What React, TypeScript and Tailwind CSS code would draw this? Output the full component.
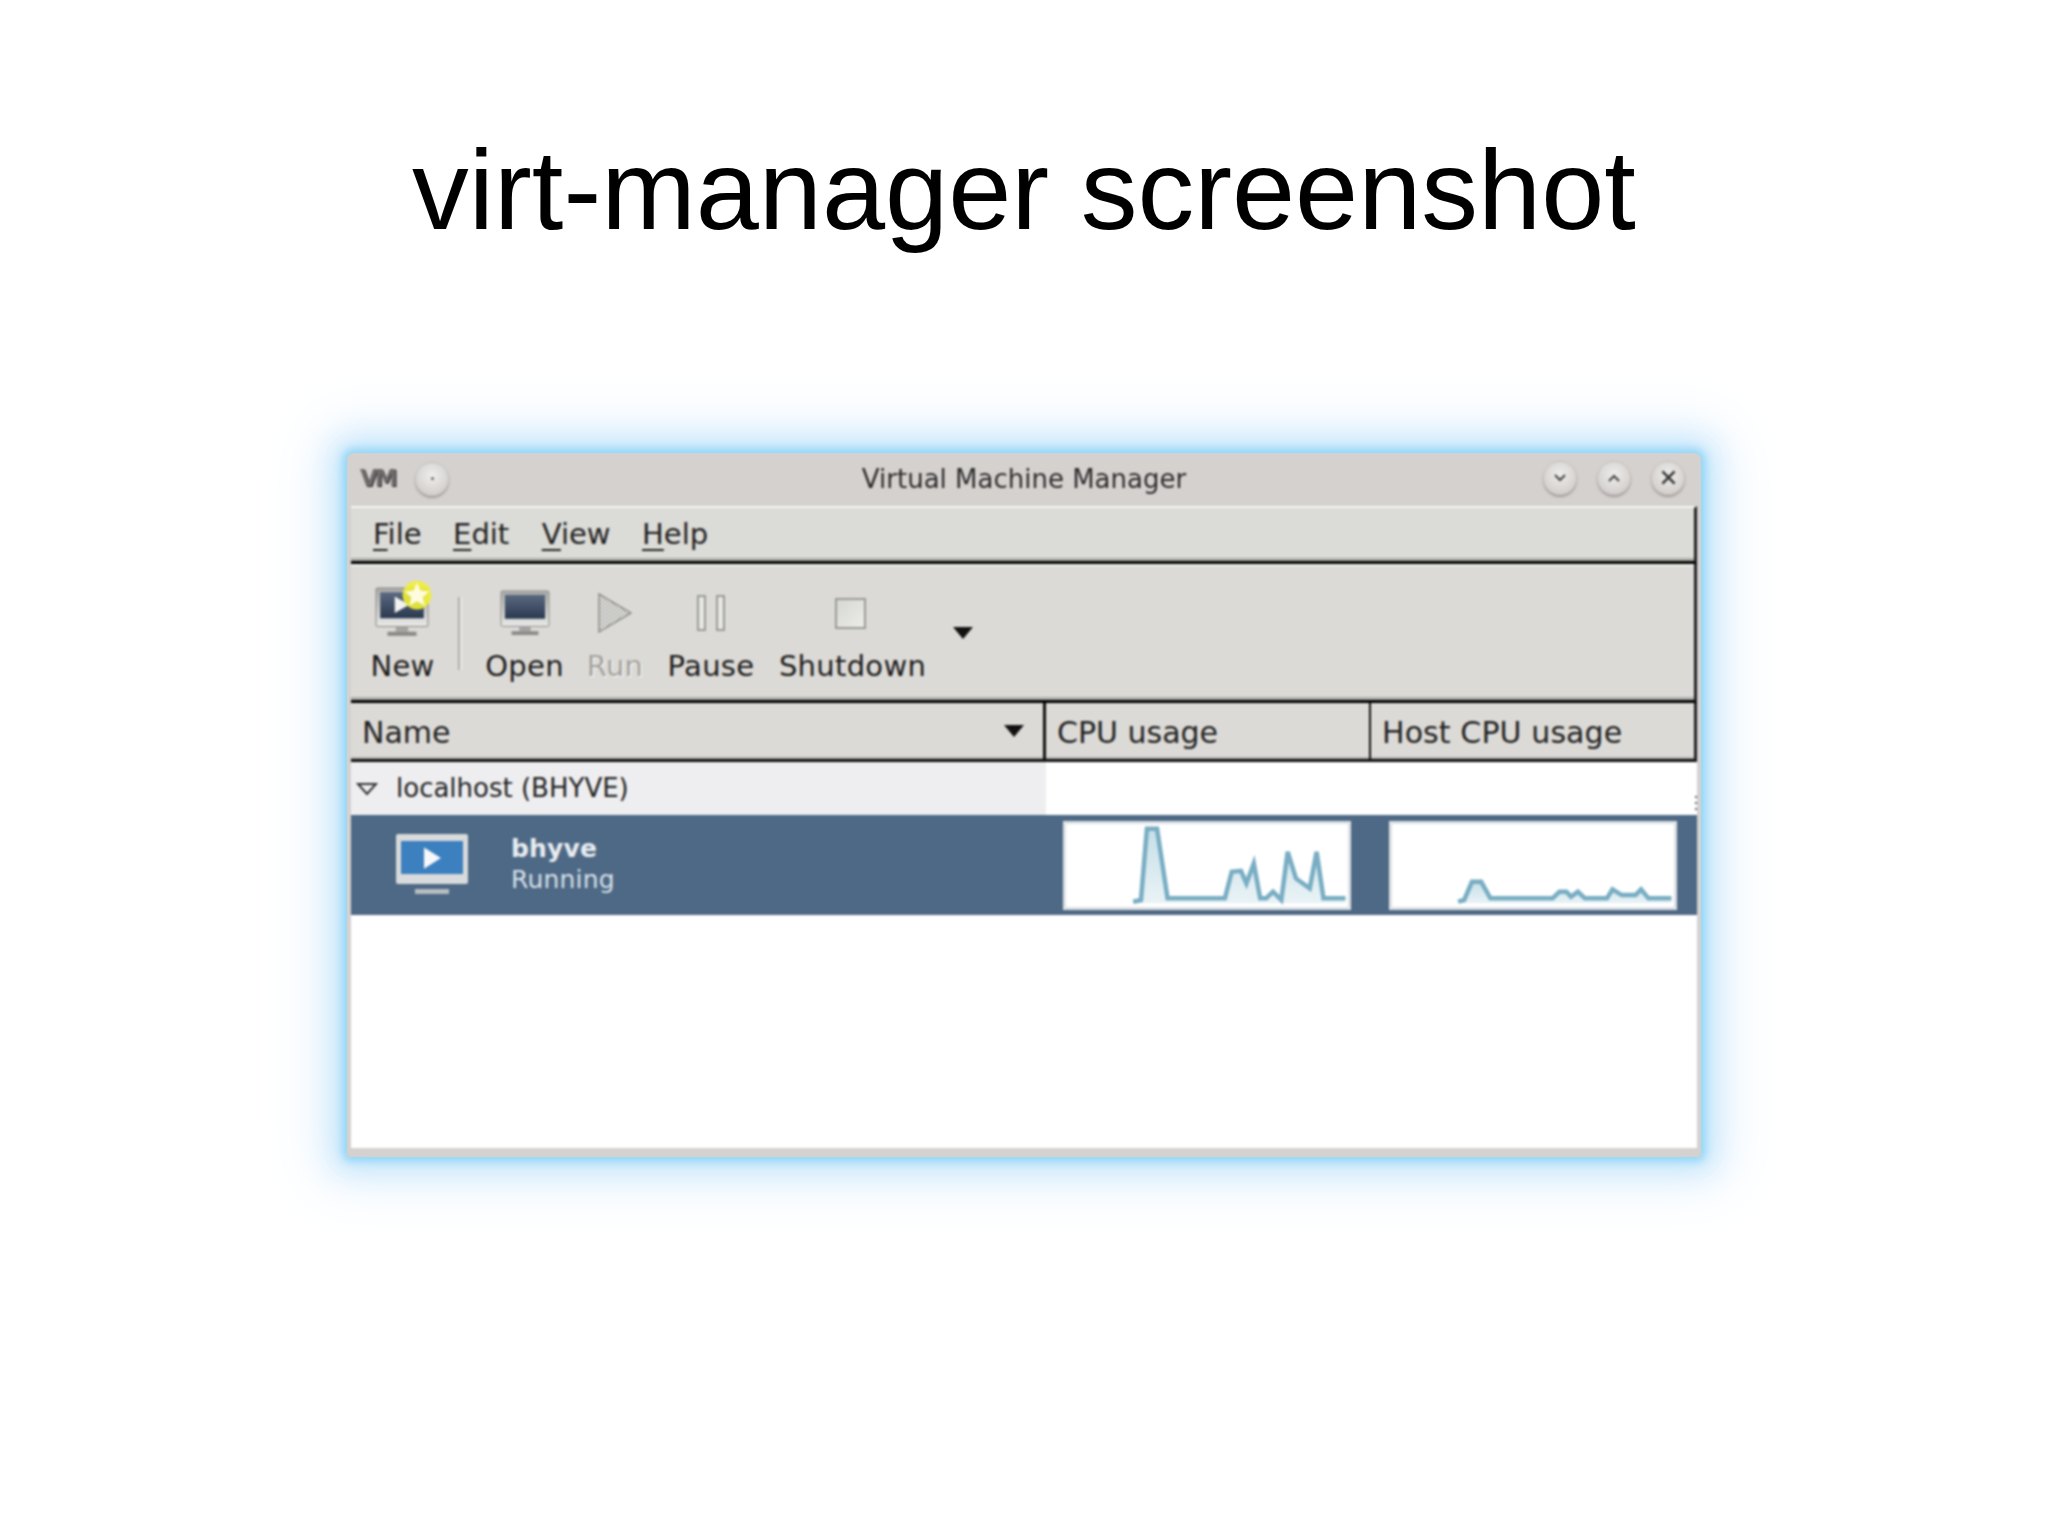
const dejavu = "font-['DejaVu_Sans',sans-serif]";

function TitleButton({ children }: { children?: React.ReactNode }) {
  return (
    <div className="w-[34px] h-[34px] rounded-full bg-[radial-gradient(circle_at_50%_40%,#efedeb,#c9c6c4)] border border-[#c4c0be] shadow-[0_2px_2px_#a19d9b] flex items-center justify-center">
      {children}
    </div>
  );
}

function Monitor({ className, play }: { className?: string; play?: boolean }) {
  return (
    <svg viewBox="0 0 52 48" className={className}>
      <defs>
        <linearGradient id="frame" x1="0" y1="0" x2="0" y2="1">
          <stop offset="0" stopColor="#a9a9a7" />
          <stop offset="1" stopColor="#e8e8e6" />
        </linearGradient>
        <linearGradient id="glass" x1="0" y1="0" x2="0" y2="1">
          <stop offset="0" stopColor="#5b6a80" />
          <stop offset="1" stopColor="#2a3950" />
        </linearGradient>
      </defs>
      <rect x="1" y="1" width="50" height="37" rx="1.5" fill="url(#frame)" stroke="#8c8c8a" strokeWidth="1" />
      <rect x="5" y="5" width="42" height="25" fill="url(#glass)" />
      {play && <path d="M19 9l14 8-14 8z" fill="#f2f2f0" />}
      <rect x="20" y="38" width="12" height="5" fill="#a4a4a2" />
      <rect x="12" y="43" width="28" height="4" fill="#8a8a88" />
    </svg>
  );
}

function ToolItem({ label, icon, gray, className }: { label: string; icon: React.ReactNode; gray?: boolean; className: string }) {
  return (
    <div className={`flex flex-col items-center shrink-0 ${className}`}>
      <div className="h-[56px] flex items-center justify-center">{icon}</div>
      <div className={`mt-[8px] leading-[34px] text-[29px] tracking-[0.3px] ${gray ? "text-[#a2a29e] [text-shadow:1px_1px_0_#fff]" : "text-[#1c1c1c]"}`}>{label}</div>
    </div>
  );
}

function Graph({ id, box, points }: { id: string; box: string; points: string }) {
  const list = points.split(" ");
  const startX = list[0].split(",")[0];
  const endX = list[list.length - 1].split(",")[0];
  return (
    <div className="w-[288px] h-[89px] bg-white border-[3px] border-[#dde1e4] shrink-0">
      <svg viewBox={box} preserveAspectRatio="none" className="w-full h-full block">
        <defs>
          <linearGradient id={id} x1="0" y1="0" x2="0" y2="1">
            <stop offset="0" stopColor="#c5dfe8" />
            <stop offset="1" stopColor="#eaf3f6" />
          </linearGradient>
        </defs>
        <polygon points={`${startX},1420 ${points} ${endX},1420`} fill={`url(#${id})`} />
        <polyline points={points} fill="none" stroke="#78adc3" strokeWidth="4.5" vectorEffect="non-scaling-stroke" />
      </svg>
    </div>
  );
}

export default function App() {
  return (
    <div className="min-h-[1535px] bg-white flex flex-col items-center">
      <h1 className="mt-[122px] text-[113.5px] leading-[136px] text-black font-['Liberation_Sans',Arial,sans-serif]">
        virt-manager screenshot
      </h1>

      {/* window */}
      <div className="mt-[195px] w-[1354px] h-[704px] rounded-t-[7px] rounded-b-[4px] bg-[#d5d1cf] flex flex-col shadow-[0_0_8px_4px_#8fd5f7,0_0_28px_14px_#c4e6fb,0_0_60px_28px_#e8f3fd]">
        <div className="blur-[0.8px] flex flex-col flex-1">
          {/* title bar */}
          <div className={`h-[53px] shrink-0 grid grid-cols-[1fr_auto_1fr] items-center px-[13px] ${dejavu}`}>
            <div className="flex items-center -mt-[2px]">
              <span className="w-[36px] text-[23px] font-black tracking-[-3px] text-[#6f6b6b] [text-shadow:1px_1px_0_#2a2a2a]">VM</span>
              <div className="ml-[19px]">
                <TitleButton>
                  <div className="w-[3px] h-[3px] rounded-full bg-[#666]" />
                </TitleButton>
              </div>
            </div>
            <div className="text-center text-[26px] text-[#2c2c2c]">Virtual Machine Manager</div>
            <div className="flex items-center justify-end gap-[20px] -mt-[4px] pr-[3px]">
              <TitleButton>
                <svg viewBox="0 0 14 10" className="w-[14px] h-[10px]" fill="none" stroke="#444" strokeWidth="2"><path d="M2 2l5 5 5-5" /></svg>
              </TitleButton>
              <TitleButton>
                <svg viewBox="0 0 14 10" className="w-[14px] h-[10px]" fill="none" stroke="#444" strokeWidth="2"><path d="M2 8l5-5 5 5" /></svg>
              </TitleButton>
              <TitleButton>
                <svg viewBox="0 0 14 14" className="w-[17px] h-[17px]" fill="none" stroke="#333" strokeWidth="2"><path d="M2 2l10 10M12 2L2 12" /></svg>
              </TitleButton>
            </div>
          </div>

          {/* body */}
          <div className={`mx-[4px] mb-[9px] flex-1 flex flex-col min-h-0 ${dejavu}`}>
            {/* menu */}
            <div className="h-[58px] shrink-0 bg-[#dbdbd7] border-t-2 border-t-[#f4f4f2] border-b-[3px] border-b-black border-r-[3px] border-r-[#222] shadow-[inset_0_-3px_0_#aeaeaa] flex items-center pl-[22px] gap-[31.5px] text-[29px] text-[#222]">
              <span><span className="underline underline-offset-[5px]">F</span>ile</span>
              <span><span className="underline underline-offset-[5px]">E</span>dit</span>
              <span className="ml-[1px]"><span className="underline underline-offset-[5px]">V</span>iew</span>
              <span><span className="underline underline-offset-[5px]">H</span>elp</span>
            </div>

            {/* toolbar */}
            <div className="h-[139px] shrink-0 bg-[#dcdad6] border-b-[3px] border-b-black border-r-[3px] border-r-[#222] shadow-[inset_0_2px_0_#f2f2f0,inset_0_-3px_0_#aeaeaa] flex items-start pt-[21px] pl-[20px]">
              <ToolItem
                label="New"
                className="w-[63px]"
                icon={
                  <div className="relative w-[56px] h-[52px]">
                    <Monitor play className="w-[54px] h-[50px]" />
                    <svg viewBox="0 0 24 24" className="absolute -top-[7px] -right-[1px] w-[30px] h-[30px]">
                      <circle cx="12" cy="12" r="11.500" fill="#eeee38" opacity="0.9" />
                      <path d="M12 2l2.800 6.500 7 .6-5.300 4.600 1.600 6.800L12 17l-6.100 3.500 1.600-6.800L2.200 9.100l7-.6z" fill="#fffbe0" />
                    </svg>
                  </div>
                }
              />
              <div className="ml-[24px] mt-[12px] w-[4px] h-[73px] bg-gradient-to-r from-[#999995] to-white shrink-0" />
              <ToolItem label="Open" className="ml-[23px] w-[79px]" icon={<Monitor className="w-[50px] h-[46px]" />} />
              <ToolItem
                label="Run"
                gray
                className="ml-[24px] w-[54px]"
                icon={
                  <svg viewBox="0 0 34 40" className="w-[34px] h-[40px]">
                    <defs>
                      <pattern id="dots" width="4" height="4" patternUnits="userSpaceOnUse">
                        <rect width="4" height="4" fill="#eeeeea" />
                        <rect width="2" height="2" fill="#a8a8a8" />
                        <rect x="2" y="2" width="2" height="2" fill="#a8a8a8" />
                      </pattern>
                    </defs>
                    <path d="M1 1l32 19L1 39z" fill="url(#dots)" stroke="#8f8f8b" strokeWidth="1.500" />
                  </svg>
                }
              />
              <ToolItem
                label="Pause"
                className="ml-[25px] w-[88px]"
                icon={
                  <div className="flex gap-[10px]">
                    <div className="w-[9px] h-[36px] border-2 border-[#9a9a96] bg-[#e6e6e2]" />
                    <div className="w-[9px] h-[36px] border-2 border-[#9a9a96] bg-[#e6e6e2]" />
                  </div>
                }
              />
              <ToolItem
                label="Shutdown"
                className="ml-[24px] w-[147px]"
                icon={<div className="-ml-[4px] w-[31px] h-[31px] border-2 border-[#9a9a96] bg-gradient-to-br from-[#d6d6d2] to-[#ecece8]" />}
              />
              <svg viewBox="0 0 20 12" className="ml-[27px] mt-[42px] w-[20px] h-[12px] shrink-0"><path d="M0 0h20L10 12z" fill="#111" /></svg>
            </div>

            {/* column headers */}
            <div className="h-[59px] shrink-0 bg-[#dcdad6] border-b-[3px] border-b-[#111] border-r-[3px] border-r-[#222] shadow-[inset_0_-2px_0_#aeaeaa] flex text-[30px] text-[#222]">
              <div className="w-[695px] border-r-[3px] border-r-[#111] flex items-center justify-between pl-[11px] pr-[19px] pt-[2px]">
                <span>Name</span>
                <svg viewBox="0 0 20 12" className="-mt-[3px] w-[20px] h-[12px]"><path d="M0 0h20L10 12z" fill="#111" /></svg>
              </div>
              <div className="w-[325px] border-r-2 border-r-[#111] flex items-center pl-[11px] pt-[2px]">CPU usage</div>
              <div className="flex-1 flex items-center pl-[11px] pt-[2px] tracking-[0.1px]">Host CPU usage</div>
            </div>

            {/* rows */}
            <div className="flex-1 bg-white flex flex-col">
              <div className="relative h-[53px]">
                <div className="h-full w-[695px] bg-[#eeeef0] flex items-center pl-[5px] text-[26px] text-[#222]">
                  <svg viewBox="0 0 22 14" className="w-[22px] h-[14px]" fill="none" stroke="#333" strokeWidth="2"><path d="M2 2h18L11 12z" /></svg>
                  <span className="ml-[18px]">localhost (BHYVE)</span>
                </div>
                {/* resize grip */}
                <div className="absolute right-0 top-[34px] flex flex-col gap-[4px]">
                  <div className="w-[2px] h-[2px] bg-[#666]" />
                  <div className="w-[2px] h-[2px] bg-[#666]" />
                  <div className="w-[2px] h-[2px] bg-[#666]" />
                </div>
              </div>
              <div className="h-[100px] bg-[#4e6985] flex items-center">
                <div className="ml-[45px] w-[72px] h-[62px] flex flex-col items-center">
                  <div className="w-[72px] h-[50px] bg-[#d8dadb] rounded-[2px] pt-[7px] px-[5px]">
                    <div className="h-[33px] bg-[#3c80bf] flex items-center justify-center">
                      <svg viewBox="0 0 16 20" className="w-[17px] h-[22px]"><path d="M0 0l16 10L0 20z" fill="#f6f8fa" /></svg>
                    </div>
                  </div>
                  <div className="mt-[5px] w-[34px] h-[5px] bg-[#b7bcc1]" />
                </div>
                <div className="ml-[43px] -mt-[2px] w-[532px] flex flex-col text-[25px] leading-[31px] text-[#e9edf1] tracking-[0.2px]">
                  <span className="font-bold">bhyve</span>
                  <span className="text-[#d8e1ea]">Running</span>
                </div>
                <div className="ml-[20px]">
                  <Graph
                    id="cpuFill"
                    box="98.5 1181 615 250"
                    points="245,1415 262,1410 275,1195 297,1195 320,1405 445,1405 460,1325 480,1322 492,1360 508,1300 522,1405 535,1405 550,1385 568,1410 582,1265 600,1345 630,1375 645,1265 660,1405 708,1405"
                  />
                </div>
                <div className="ml-[38px]">
                  <Graph
                    id="hostFill"
                    box="811.5 1181 612 250"
                    points="955,1415 968,1410 985,1355 1005,1355 1025,1405 1160,1405 1175,1385 1190,1385 1200,1400 1215,1385 1230,1405 1278,1405 1290,1378 1310,1395 1340,1395 1352,1378 1368,1405 1418,1405"
                  />
                </div>
              </div>
            </div>
          </div>
        </div>
      </div>
    </div>
  );
}
